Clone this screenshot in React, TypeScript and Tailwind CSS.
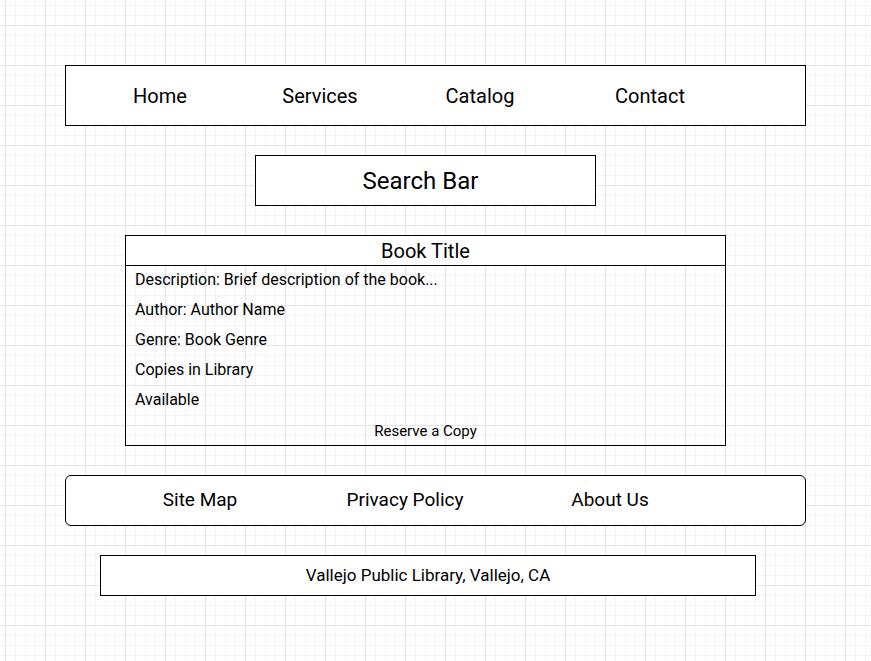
export default function App() {
  return (
    <div
      className="min-h-screen w-full bg-white pt-[65px] pb-[40px] text-black [font-family:Roboto,'Liberation_Sans',sans-serif] [background-image:linear-gradient(to_right,#e5e5e5_1px,transparent_1px),linear-gradient(to_bottom,#e5e5e5_1px,transparent_1px),linear-gradient(to_right,#f4f4f4_1px,transparent_1px),linear-gradient(to_bottom,#f4f4f4_1px,transparent_1px)] [background-size:40px_40px,40px_40px,10px_10px,10px_10px] [background-position:5px_25px,5px_25px,5px_25px,5px_25px]"
    >
      {/* Top navigation */}
      <nav className="ml-[65px] flex h-[61px] w-[741px] items-center border border-black bg-white pl-[14px] text-[20px]">
        <div className="w-[160px] text-center">Home</div>
        <div className="w-[160px] text-center">Services</div>
        <div className="w-[160px] text-center">Catalog</div>
        <div className="ml-[10px] w-[160px] text-center">Contact</div>
      </nav>

      {/* Search bar */}
      <div className="ml-[255px] mt-[29px] flex h-[51px] w-[341px] items-center justify-center border border-black bg-white pr-[10px] text-[24px]">
        Search Bar
      </div>

      {/* Book card */}
      <div className="ml-[125px] mt-[29px] flex h-[211px] w-[601px] flex-col border border-black">
        <div className="flex h-[30px] items-center justify-center border-b border-black bg-white text-[20px]">
          Book Title
        </div>
        <div className="flex h-[30px] items-center pb-[2px] pl-[9px] text-[16px]">
          Description: Brief description of the book...
        </div>
        <div className="flex h-[30px] items-center pb-[2px] pl-[9px] text-[16px]">
          Author: Author Name
        </div>
        <div className="flex h-[30px] items-center pb-[2px] pl-[9px] text-[16px]">
          Genre: Book Genre
        </div>
        <div className="flex h-[30px] items-center pb-[2px] pl-[9px] text-[16px]">
          Copies in Library
        </div>
        <div className="flex h-[30px] items-center pb-[2px] pl-[9px] text-[16px]">
          Available
        </div>
        <div className="flex flex-1 items-center justify-center pt-[2px] text-[15px]">
          Reserve a Copy
        </div>
      </div>

      {/* Footer navigation */}
      <div className="ml-[65px] mt-[29px] flex h-[51px] w-[741px] items-center gap-[5px] rounded-[6px] border border-black bg-white pl-[34px] text-[19px]">
        <div className="w-[200px] text-center">Site Map</div>
        <div className="w-[200px] text-center">Privacy Policy</div>
        <div className="w-[200px] text-center">About Us</div>
      </div>

      {/* Address */}
      <div className="ml-[100px] mt-[29px] flex h-[41px] w-[656px] items-center justify-center border border-black bg-white text-[17px]">
        Vallejo Public Library, Vallejo, CA
      </div>
    </div>
  );
}
